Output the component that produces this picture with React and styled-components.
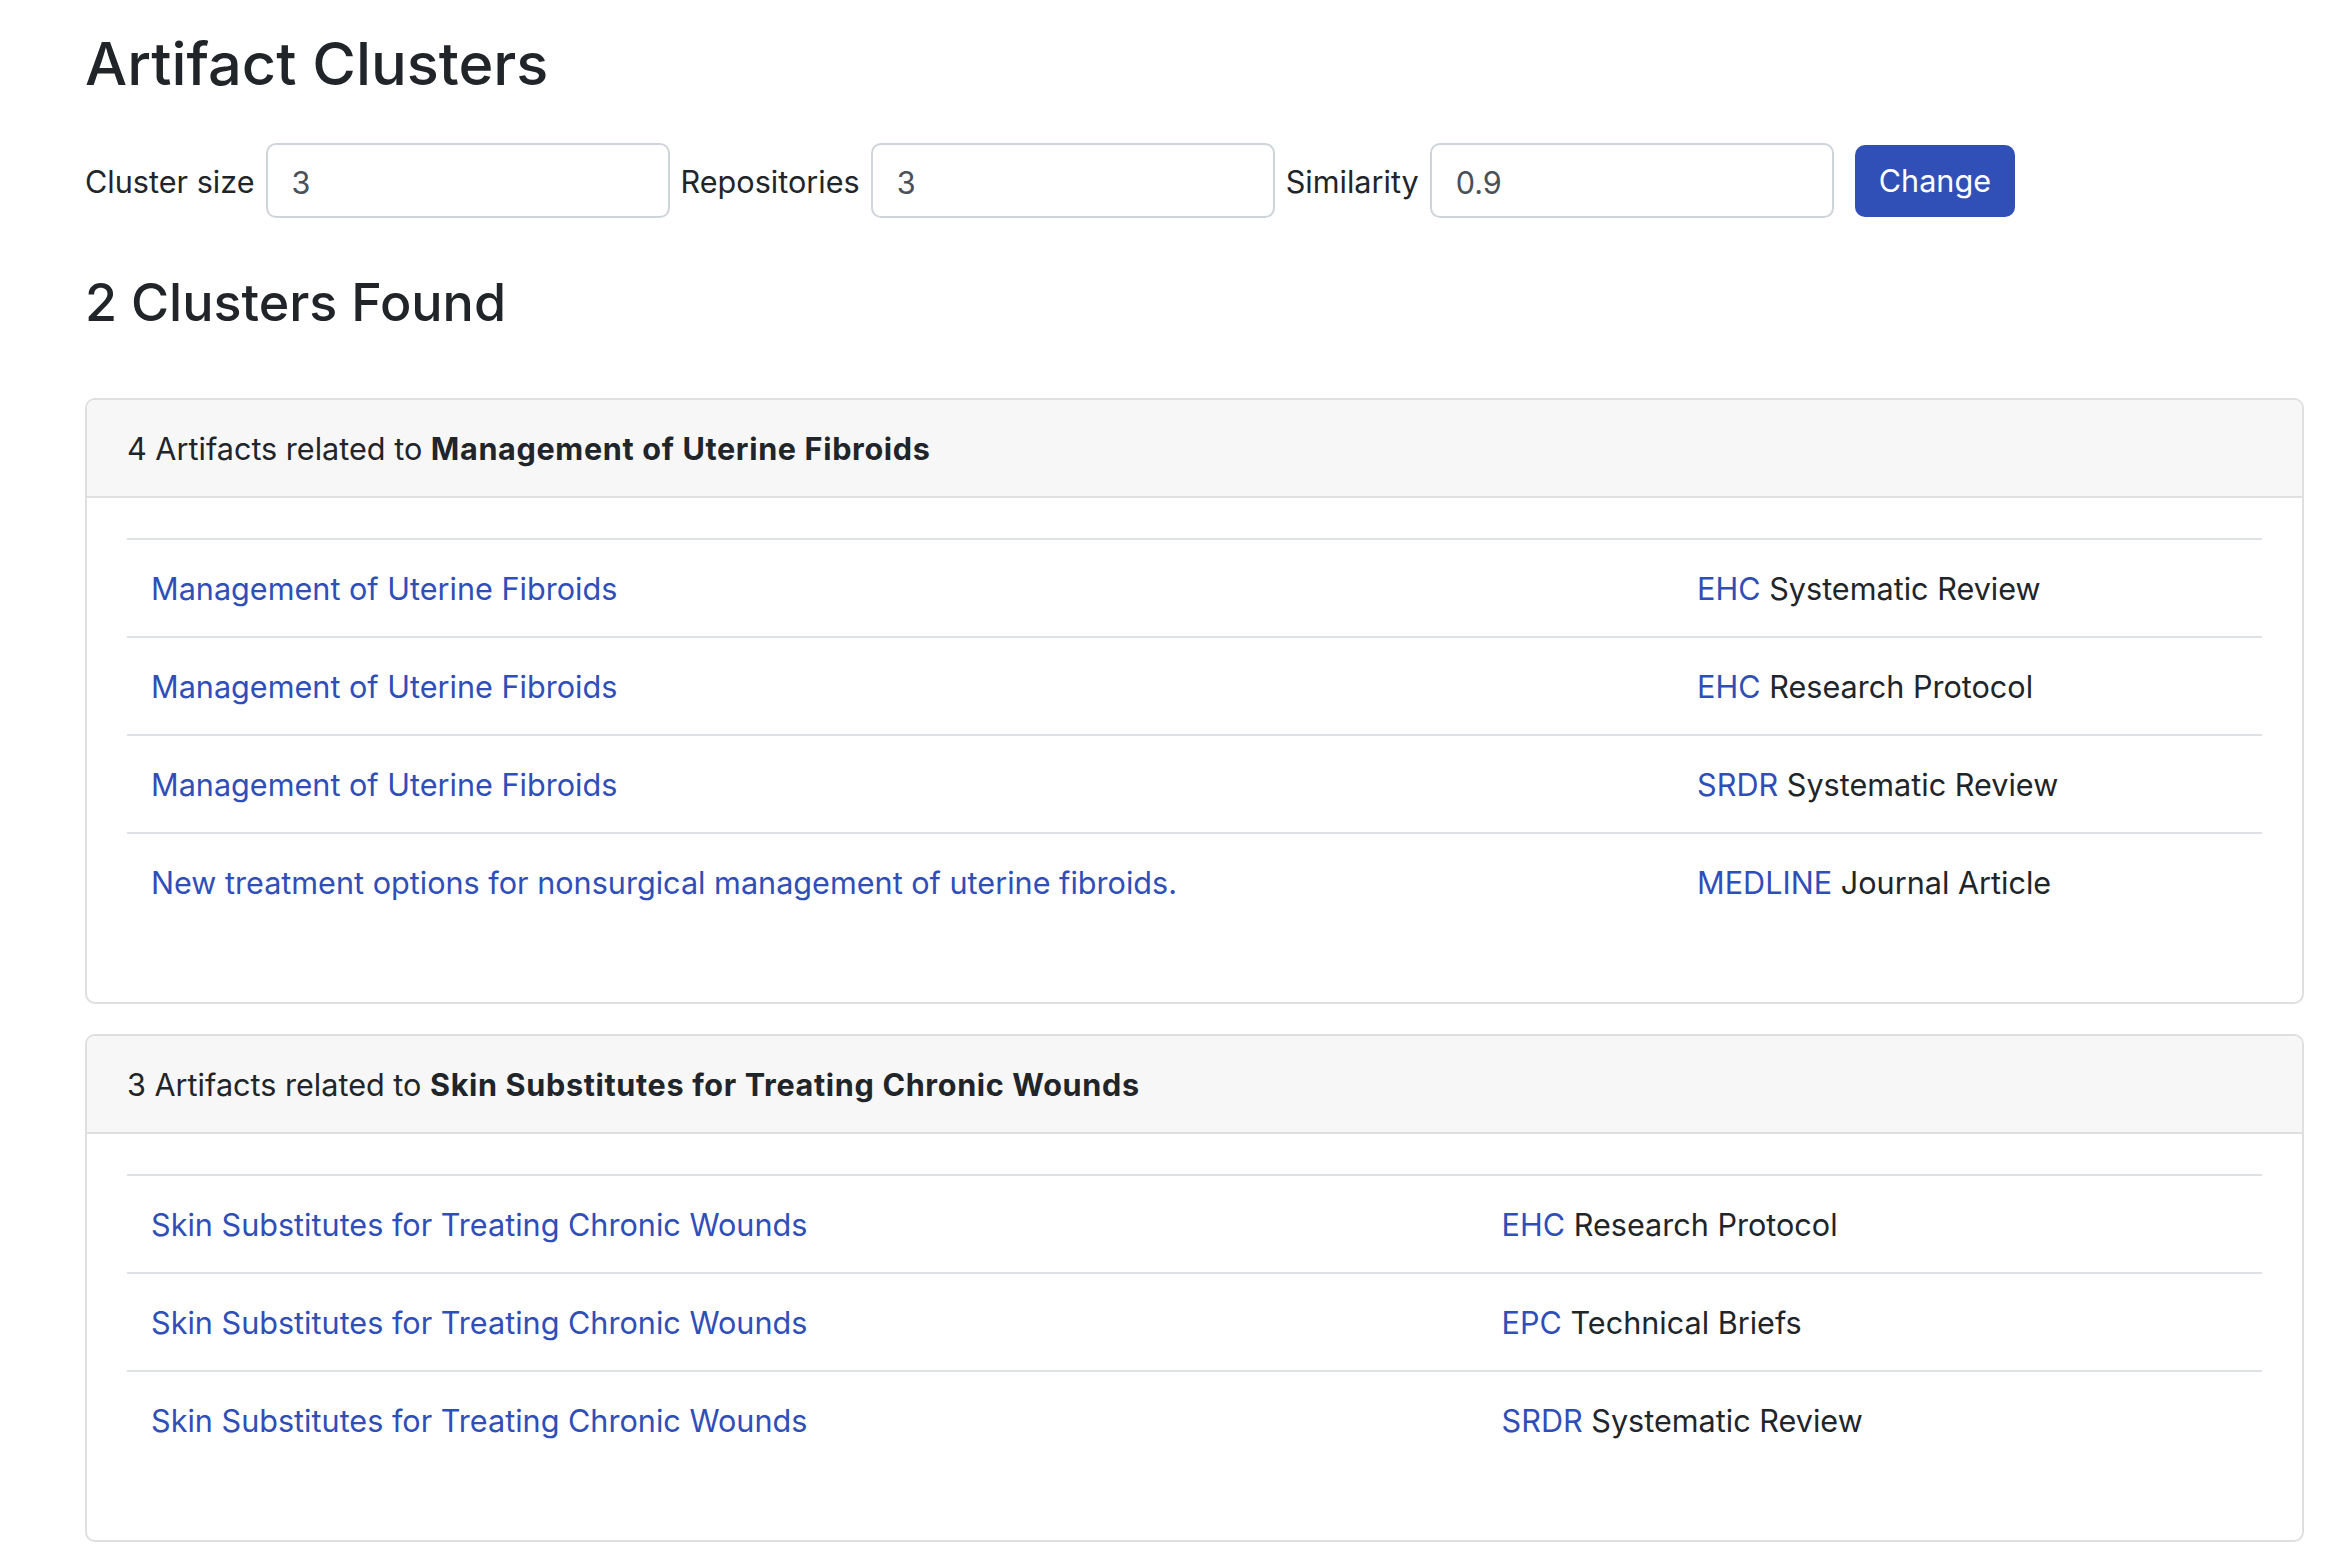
import React from "react";
import styled, { createGlobalStyle } from "styled-components";

const GlobalStyle = createGlobalStyle`
  body {
    margin: 0;
    background: #fff;
    color: #212529;
    font-family: Inter, "Noto Sans", sans-serif;
    font-size: 30.6px;
    line-height: 1.5;
  }
  * { box-sizing: border-box; }
`;

const Page = styled.main`
  padding: 27px 34px 40px 85px;
`;

const Title = styled.h1`
  margin: 0;
  font-size: 59.5px;
  font-weight: 500;
  line-height: 72px;
`;

const FilterForm = styled.form`
  display: flex;
  align-items: center;
  gap: 11px;
  margin-top: 44px;
`;

const Label = styled.label`
  white-space: nowrap;
  padding-top: 3px;
`;

const Input = styled.input`
  width: 404px;
  height: 75px;
  padding: 3px 24px 0;
  border: 2px solid #ced4da;
  border-radius: 10px;
  font: inherit;
  color: #495057;
  background: #fff;
`;

const Button = styled.button`
  margin-left: 10px;
  height: 72px;
  padding: 0 24px;
  border: 0;
  border-radius: 10px;
  background: #3050b7;
  color: #fff;
  font: inherit;
`;

const Subtitle = styled.h2`
  margin: 54px 0 64px;
  font-size: 52px;
  font-weight: 500;
  line-height: 62px;
`;

const Card = styled.section`
  border: 2px solid #dfdfdf;
  border-radius: 10px;
  margin-bottom: 30px;
  overflow: hidden;
`;

const CardHeader = styled.header`
  background: #f7f7f7;
  border-bottom: 2px solid #dfdfdf;
  padding: 25px 40px 23px;
  line-height: 48px;

  strong {
    font-weight: 700;
    letter-spacing: 0.65px;
  }
`;

const CardBody = styled.div`
  padding: 40px;
`;

const Table = styled.table`
  width: 100%;
  border-collapse: collapse;
  margin-bottom: 32px;

  td {
    padding: 25px 24px 23px;
    border-top: 2px solid #dee2e6;
    line-height: 48px;
    vertical-align: top;
    white-space: nowrap;
  }
`;

const Link = styled.a`
  color: #2f4eb8;
  text-decoration: none;
`;

const clusters = [
  {
    topic: "Management of Uterine Fibroids",
    items: [
      ["Management of Uterine Fibroids", "EHC", "Systematic Review"],
      ["Management of Uterine Fibroids", "EHC", "Research Protocol"],
      ["Management of Uterine Fibroids", "SRDR", "Systematic Review"],
      ["New treatment options for nonsurgical management of uterine fibroids.", "MEDLINE", "Journal Article"],
    ],
  },
  {
    topic: "Skin Substitutes for Treating Chronic Wounds",
    items: [
      ["Skin Substitutes for Treating Chronic Wounds", "EHC", "Research Protocol"],
      ["Skin Substitutes for Treating Chronic Wounds", "EPC", "Technical Briefs"],
      ["Skin Substitutes for Treating Chronic Wounds", "SRDR", "Systematic Review"],
    ],
  },
];

const App = () => {
  return (
    <Page>
      <GlobalStyle />
      <Title>Artifact Clusters</Title>
      <FilterForm onSubmit={(e) => e.preventDefault()}>
        <Label htmlFor="size">Cluster size</Label>
        <Input id="size" defaultValue="3" />
        <Label htmlFor="repos">Repositories</Label>
        <Input id="repos" defaultValue="3" />
        <Label htmlFor="sim">Similarity</Label>
        <Input id="sim" defaultValue="0.9" />
        <Button type="submit">Change</Button>
      </FilterForm>
      <Subtitle>{clusters.length} Clusters Found</Subtitle>
      {clusters.map((c) => (
        <Card key={c.topic}>
          <CardHeader>
            {c.items.length} Artifacts related to <strong>{c.topic}</strong>
          </CardHeader>
          <CardBody>
            <Table>
              <tbody>
                {c.items.map(([title, repo, kind], i) => (
                  <tr key={i}>
                    <td><Link href="#">{title}</Link></td>
                    <td><Link href="#">{repo}</Link> {kind}</td>
                  </tr>
                ))}
              </tbody>
            </Table>
          </CardBody>
        </Card>
      ))}
    </Page>
  );
};

export default App;
